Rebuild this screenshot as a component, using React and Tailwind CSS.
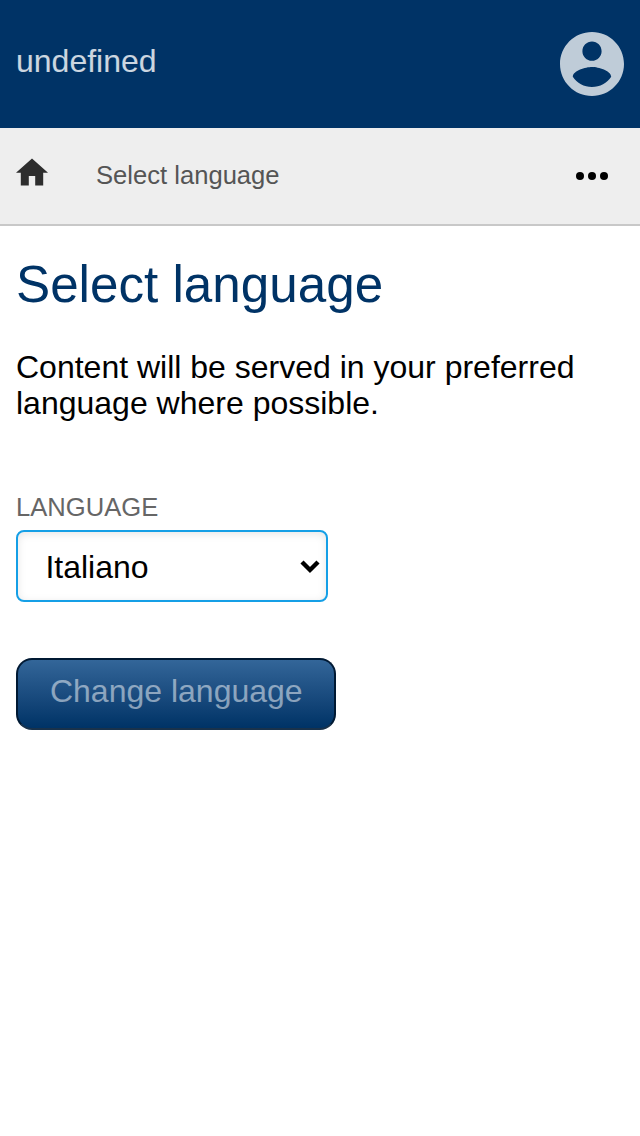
function AccountIcon() {
  return (
    <svg viewBox="2 2 20 20" className="size-16 fill-white opacity-75" aria-hidden="true">
      <path d="M12 2C6.48 2 2 6.48 2 12s4.48 10 10 10 10-4.48 10-10S17.52 2 12 2zm0 3c1.66 0 3 1.34 3 3s-1.34 3-3 3-3-1.34-3-3 1.34-3 3-3zm0 14.2c-2.5 0-4.71-1.28-6-3.22.03-1.99 4-3.08 6-3.08 1.99 0 5.97 1.09 6 3.08-1.29 1.94-3.5 3.22-6 3.22z" />
    </svg>
  );
}

function HomeIcon() {
  return (
    <svg viewBox="2 2.75 20 17.5" className="mb-2 h-7 w-8 fill-[#2d2d2d]" aria-hidden="true">
      <path d="M10 20v-6h4v6h5v-8h3L12 3 2 12h3v8z" />
    </svg>
  );
}

function MoreIcon() {
  return (
    <svg viewBox="0 0 32 8" className="h-2 w-8 fill-black" aria-hidden="true">
      <circle cx="4" cy="4" r="4" />
      <circle cx="16" cy="4" r="4" />
      <circle cx="28" cy="4" r="4" />
    </svg>
  );
}

export default function App() {
  return (
    <div className="min-h-screen bg-white font-['Liberation_Sans',Arial,sans-serif] text-[32px] leading-9 text-black">
      <header className="flex h-32 items-center justify-between bg-[#003366] px-4">
        <span className="pb-1.5 text-white/80">undefined</span>
        <AccountIcon />
      </header>
      <nav className="flex h-[98px] items-center border-b-2 border-[#c8c8c8] bg-[#eeeeee] pr-8 pl-4">
        <HomeIcon />
        <span className="ml-12 flex-1 pb-0.5 text-[25.6px] leading-8 text-[#555555]">Select language</span>
        <MoreIcon />
      </nav>
      <main className="px-4 pt-[30px]">
        <h1 className="text-[51.2px] leading-[58px] text-[#003366]">Select language</h1>
        <p className="mt-[35px]">Content will be served in your preferred language where possible.</p>
        <label htmlFor="language" className="mt-[71px] block text-[25.6px] leading-[30px] text-[#666666] uppercase">
          Language
        </label>
        <div className="relative mt-2 h-[72px] w-[312px]">
          <select
            id="language"
            defaultValue="it"
            className="h-full w-full appearance-none rounded-lg border-2 border-[#159fe6] bg-white pt-0.5 pl-[27.4px] shadow-[inset_0_2px_8px_rgba(0,0,0,0.1)] outline-none"
          >
            <option value="it">Italiano</option>
          </select>
          <svg viewBox="0 0 20 14" className="pointer-events-none absolute top-[30px] right-2 h-3.5 w-5 fill-none stroke-black stroke-[4.4]" aria-hidden="true">
            <path d="M2 2l8 8 8-8" />
          </svg>
        </div>
        <button className="mt-14 block h-[72px] w-80 rounded-2xl border-2 border-[#001933] border-b-[#19324b] bg-linear-to-b from-[#336699] to-[#003366] pb-1.5 pl-[0.6px] text-white/50">
          Change language
        </button>
      </main>
    </div>
  );
}
